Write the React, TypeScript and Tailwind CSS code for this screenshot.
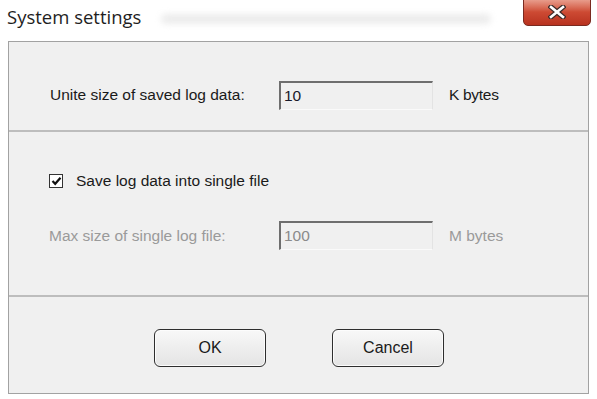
function TextBox({ value, dim }: { value: string; dim?: boolean }) {
  return (
    <div className="h-[29px] w-[154px] border-t-2 border-l-2 border-t-[#6e6e6e] border-l-[#6e6e6e] border-b border-r border-b-[#fafafa] border-r-[#e3e3e3] bg-[#f0f0f0] pl-[3px] flex items-center">
      <span className={dim ? "text-[15.5px] text-[#8a8a8a]" : "text-[15.5px] text-[#1a1a2a]"}>{value}</span>
    </div>
  );
}

function Button({ label }: { label: string }) {
  return (
    <button className="h-[38px] w-[112px] rounded-[6px] border-[1.5px] border-[#2e2e2e] bg-gradient-to-b from-[#f8f8f8] to-[#e4e4e4] text-[16px] text-[#1a1a1a] shadow-[inset_0_0_0_1px_#fcfcfc]">
      {label}
    </button>
  );
}

export default function App() {
  return (
    <div
      className="w-[597px] h-[399px] bg-white relative overflow-hidden"
      style={{ fontFamily: '"Liberation Sans", Arial, sans-serif' }}
    >
      <div className="h-[41px] flex items-start">
        <span
          className="ml-[7px] mt-[3px] text-[18.5px] text-[#1e1e1e]"
          style={{ fontFamily: '"Open Sans", "Noto Sans", sans-serif' }}
        >
          System settings
        </span>
        <div className="ml-[20px] mt-[14px] h-[10px] w-[330px] rounded-full bg-[#ececec] blur-[3px]" />
        <div className="ml-auto mr-[6px] -mt-[2px] h-[28px] w-[68px] rounded-b-[5px] border border-[#7a2a20] bg-gradient-to-b from-[#e9a292] via-[#cd4a33] to-[#b8321f] flex items-center justify-center">
          <svg width="18" height="14" viewBox="0 0 18 14">
            <path d="M3 2 L15 12 M15 2 L3 12" stroke="#3b2a28" strokeWidth="5" strokeLinecap="square" />
            <path d="M3 2 L15 12 M15 2 L3 12" stroke="#ffffff" strokeWidth="2.6" strokeLinecap="square" />
          </svg>
        </div>
      </div>

      <div className="ml-[8px] w-[581px] h-[353px] border border-[#a2a2a2] bg-[#f0f0f0] flex flex-col">
        <div className="h-[90px] border-b-2 border-b-[#bdbdbd] flex items-center pl-[41px] pt-[18px]">
          <span className="w-[229px] text-[15.5px] text-[#1a1a1a]">Unite size of saved log data:</span>
          <TextBox value="10" />
          <span className="ml-[16px] text-[15.5px] text-[#1a1a1a] tracking-[-0.3px]">K bytes</span>
        </div>

        <div className="h-[165px] border-b-2 border-b-[#bdbdbd] flex flex-col pl-[40px] pt-[40px]">
          <div className="flex items-center h-[18px]">
            <div className="w-[14px] h-[14px] border border-[#333] bg-white flex items-center justify-center">
              <svg width="11" height="10" viewBox="0 0 11 10">
                <path d="M1.5 5 L4.2 7.8 L9.5 1.8" stroke="#111" strokeWidth="2.2" fill="none" />
              </svg>
            </div>
            <span className="ml-[13px] text-[15.5px] text-[#1a1a1a]">Save log data into single file</span>
          </div>
          <div className="flex items-center mt-[31px]">
            <span className="w-[230px] text-[15.5px] text-[#9a9a9a]">Max size of single log file:</span>
            <TextBox value="100" dim />
            <span className="ml-[16px] text-[15.5px] text-[#9a9a9a]">M bytes</span>
          </div>
        </div>

        <div className="flex-1 flex items-start pt-[32px] pl-[145px] gap-[66px]">
          <Button label="OK" />
          <Button label="Cancel" />
        </div>
      </div>
    </div>
  );
}
